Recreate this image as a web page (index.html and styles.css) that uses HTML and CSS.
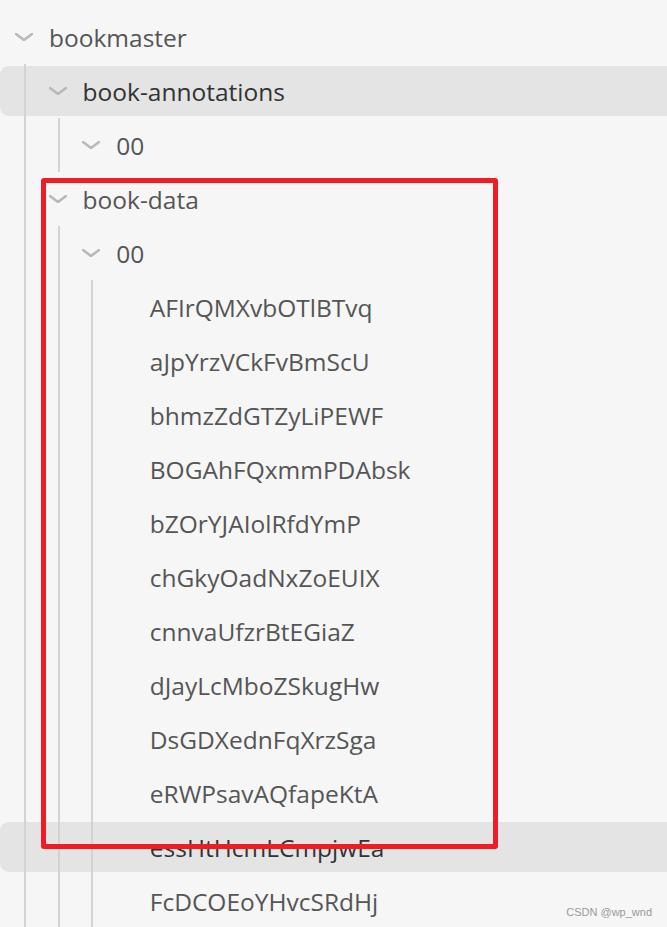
FILE: index.html
```html
<!DOCTYPE html>
<html lang="en">
<head>
<meta charset="utf-8">
<title>bookmaster</title>
<link rel="stylesheet" href="styles.css">
</head>
<body>
<div class="tree">
  <div class="row">
    <span class="twisty"><svg viewBox="0 0 18 8" width="18" height="8"><path d="M1 1 L9 7 L17 1" /></svg></span>
    <span class="label">bookmaster</span>
  </div>
  <div class="row active">
    <span class="indent guide"></span>
    <span class="twisty"><svg viewBox="0 0 18 8" width="18" height="8"><path d="M1 1 L9 7 L17 1" /></svg></span>
    <span class="label">book-annotations</span>
  </div>
  <div class="row">
    <span class="indent guide"></span><span class="indent guide"></span>
    <span class="twisty"><svg viewBox="0 0 18 8" width="18" height="8"><path d="M1 1 L9 7 L17 1" /></svg></span>
    <span class="label">00</span>
  </div>
  <div class="row">
    <span class="indent guide"></span>
    <span class="twisty"><svg viewBox="0 0 18 8" width="18" height="8"><path d="M1 1 L9 7 L17 1" /></svg></span>
    <span class="label">book-data</span>
  </div>
  <div class="row">
    <span class="indent guide"></span><span class="indent guide"></span>
    <span class="twisty"><svg viewBox="0 0 18 8" width="18" height="8"><path d="M1 1 L9 7 L17 1" /></svg></span>
    <span class="label">00</span>
  </div>
  <div class="row"><span class="indent guide"></span><span class="indent guide"></span><span class="indent guide"></span><span class="twisty"></span><span class="label">AFIrQMXvbOTlBTvq</span></div>
  <div class="row"><span class="indent guide"></span><span class="indent guide"></span><span class="indent guide"></span><span class="twisty"></span><span class="label">aJpYrzVCkFvBmScU</span></div>
  <div class="row"><span class="indent guide"></span><span class="indent guide"></span><span class="indent guide"></span><span class="twisty"></span><span class="label">bhmzZdGTZyLiPEWF</span></div>
  <div class="row"><span class="indent guide"></span><span class="indent guide"></span><span class="indent guide"></span><span class="twisty"></span><span class="label">BOGAhFQxmmPDAbsk</span></div>
  <div class="row"><span class="indent guide"></span><span class="indent guide"></span><span class="indent guide"></span><span class="twisty"></span><span class="label">bZOrYJAIolRfdYmP</span></div>
  <div class="row"><span class="indent guide"></span><span class="indent guide"></span><span class="indent guide"></span><span class="twisty"></span><span class="label">chGkyOadNxZoEUIX</span></div>
  <div class="row"><span class="indent guide"></span><span class="indent guide"></span><span class="indent guide"></span><span class="twisty"></span><span class="label">cnnvaUfzrBtEGiaZ</span></div>
  <div class="row"><span class="indent guide"></span><span class="indent guide"></span><span class="indent guide"></span><span class="twisty"></span><span class="label">dJayLcMboZSkugHw</span></div>
  <div class="row"><span class="indent guide"></span><span class="indent guide"></span><span class="indent guide"></span><span class="twisty"></span><span class="label">DsGDXednFqXrzSga</span></div>
  <div class="row"><span class="indent guide"></span><span class="indent guide"></span><span class="indent guide"></span><span class="twisty"></span><span class="label">eRWPsavAQfapeKtA</span></div>
  <div class="row active"><span class="indent guide"></span><span class="indent guide"></span><span class="indent guide"></span><span class="twisty"></span><span class="label">essHtHcmLCmpjwEa</span></div>
  <div class="row"><span class="indent guide"></span><span class="indent guide"></span><span class="indent guide"></span><span class="twisty"></span><span class="label">FcDCOEoYHvcSRdHj</span></div>
</div>
<div class="mark"></div>
<div class="watermark">CSDN @wp_wnd</div>
</body>
</html>
```
FILE: styles.css
```css
html, body {
  margin: 0;
  padding: 0;
  background: #f6f6f6;
  height: 100%;
  overflow: hidden;
}
body {
  position: relative;
  font-family: "Open Sans", "Noto Sans", sans-serif;
}
.tree {
  padding-top: 10px;
}
.row {
  display: flex;
  align-items: center;
  height: 54px;
  box-sizing: border-box;
  padding-left: 15px;
  border-top: 2px solid transparent;
  border-bottom: 2px solid transparent;
  background-clip: padding-box;
  border-radius: 10px 0 0 10px;
}
.row.active {
  background-color: #e4e4e4;
}
.row.active .label {
  color: #333;
}
.indent {
  flex: 0 0 33.6px;
  align-self: stretch;
  margin: -2px 0;
}
.guide {
  background: linear-gradient(#d3d3d3, #d3d3d3) no-repeat 9px 0 / 2px 100%;
}
.twisty {
  flex: 0 0 34px;
  display: flex;
  align-items: center;
}
.twisty svg {
  display: block;
  fill: none;
  stroke: #b9b9b9;
  stroke-width: 2.6;
  stroke-linecap: round;
  stroke-linejoin: round;
}
.label {
  font-size: 24.5px;
  color: #555;
  white-space: nowrap;
  line-height: 1;
  padding-top: 3px;
}
.mark {
  position: absolute;
  left: 41px;
  top: 178px;
  width: 447px;
  height: 661px;
  border: 5px solid #ee1c25;
  border-radius: 3px;
}
.watermark {
  position: absolute;
  right: 15px;
  bottom: 9px;
  font-family: "Liberation Sans", Arial, sans-serif;
  font-size: 11px;
  color: #999;
}
```
